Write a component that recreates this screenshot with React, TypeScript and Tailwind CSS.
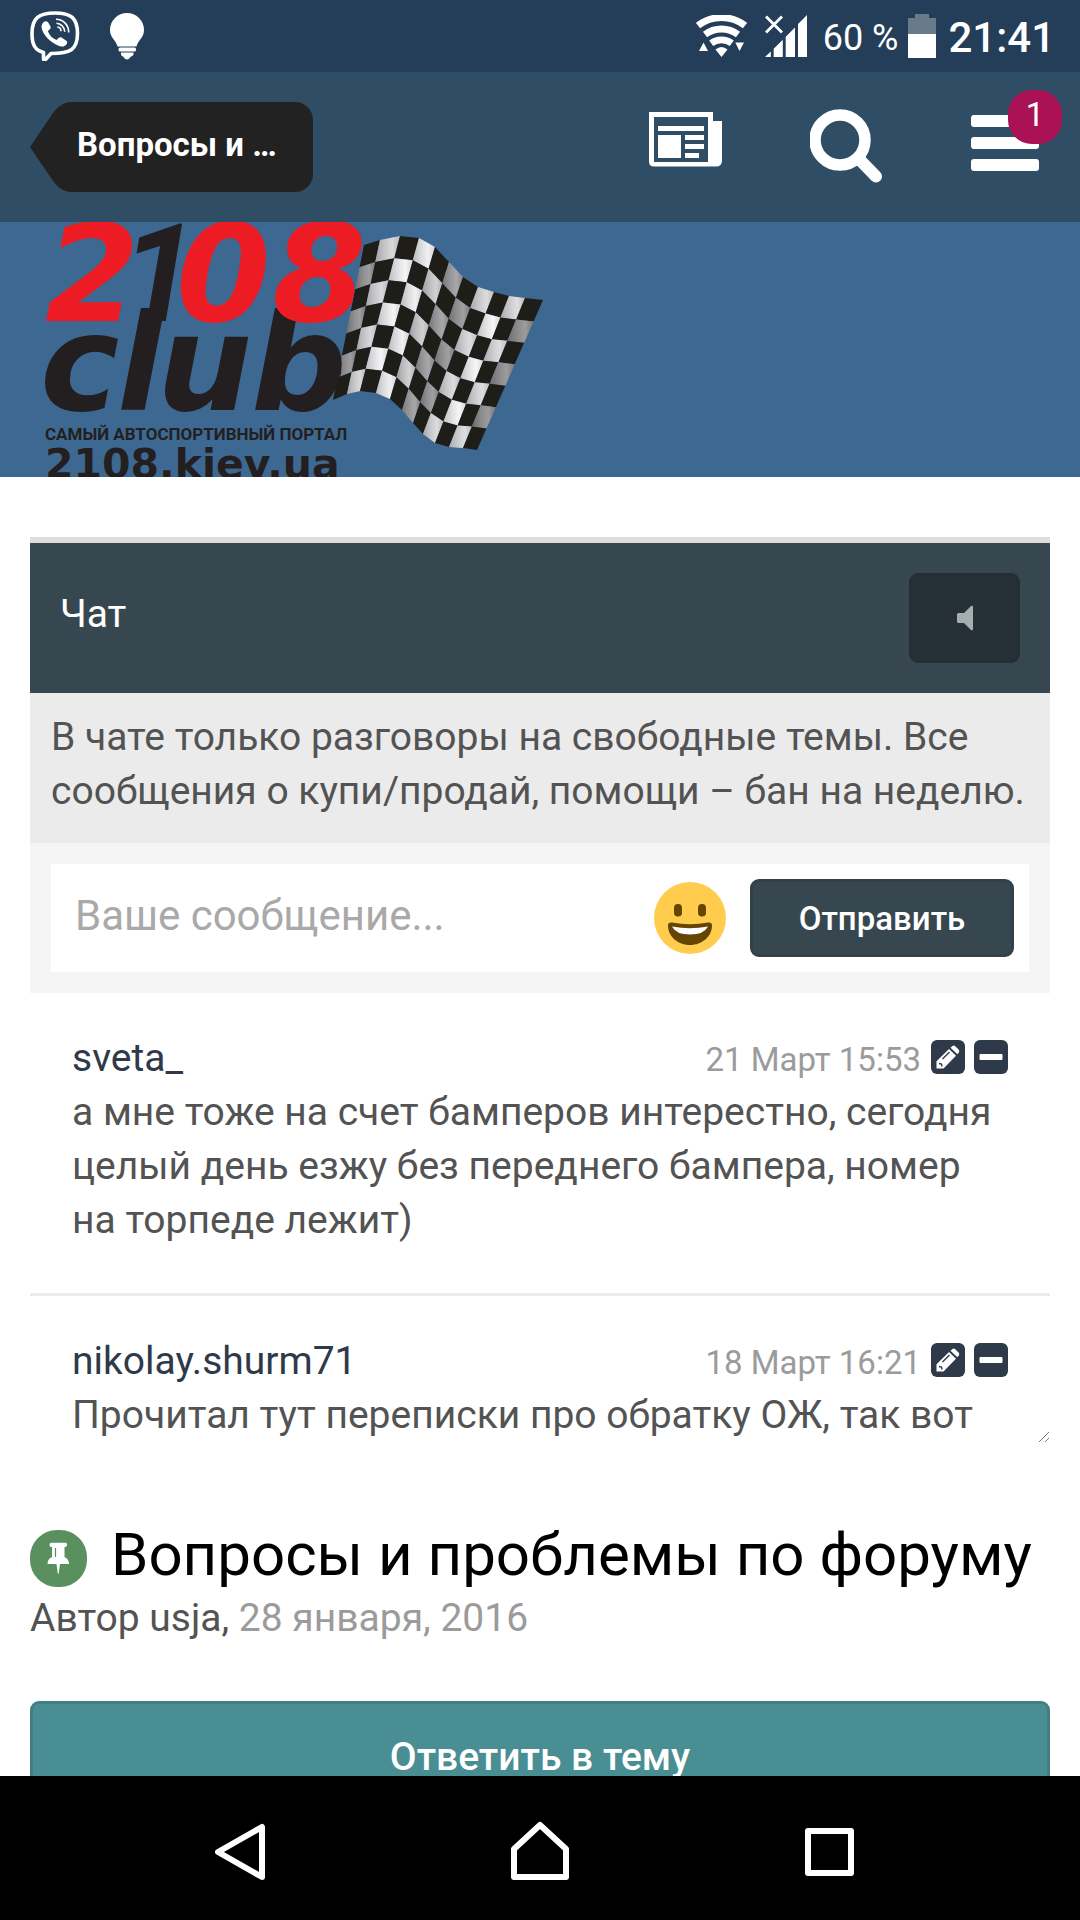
import React, { useState } from "react";

const MESSAGES = [
  {
    id: 1,
    author: "sveta_",
    date: "21 Март 15:53",
    text: "а мне тоже на счет бамперов интерестно, сегодня целый день езжу без переднего бампера, номер на торпеде лежит)",
  },
  {
    id: 2,
    author: "nikolay.shurm71",
    date: "18 Март 16:21",
    text: "Прочитал тут переписки про обратку ОЖ, так вот",
  },
];

// Flag edges, from the pole side to the free side
const FLAG_TOP = [
  [319, 23], [335, 18], [355, 14], [374, 16], [390, 25], [404, 40],
  [418, 55], [433, 65], [449, 70], [464, 74], [480, 76], [498, 78],
];
const FLAG_BOTTOM = [
  [288, 178], [302, 172], [315, 169], [331, 171], [345, 177], [357, 188],
  [368, 201], [378, 212], [390, 221], [404, 225], [418, 226], [432, 228],
];
const FLAG_ROWS = 7;
const FLAG_SHADES = [
  "#8d8d90", "#d2d2d5", "#f2f2f4", "#eeeef0", "#c9c9cc", "#98989b",
  "#8f8f92", "#d6d6d8", "#f4f4f5", "#d8d8da", "#8a8a8c",
];

function flagPoint(col: number, row: number) {
  const t = row / FLAG_ROWS;
  const [x1, y1] = FLAG_TOP[col];
  const [x2, y2] = FLAG_BOTTOM[col];
  return `${x1 + (x2 - x1) * t},${y1 + (y2 - y1) * t}`;
}

function Flag() {
  const cells = [];
  for (let col = 0; col < FLAG_SHADES.length; col++) {
    for (let row = 0; row < FLAG_ROWS; row++) {
      const points = [
        flagPoint(col, row),
        flagPoint(col + 1, row),
        flagPoint(col + 1, row + 1),
        flagPoint(col, row + 1),
      ].join(" ");
      const dark = (col + row) % 2 === 0;
      cells.push(
        <g key={`${col}-${row}`}>
          <polygon points={points} fill={dark ? "#1f1d18" : FLAG_SHADES[col]} />
          {!dark && <polygon points={points} fill="url(#fold)" />}
        </g>
      );
    }
  }
  return (
    <g>
      <defs>
        <linearGradient id="fold">
          <stop offset="0" stopColor="#000" stopOpacity="0.22" />
          <stop offset="0.7" stopColor="#fff" stopOpacity="0.15" />
          <stop offset="1" stopColor="#000" stopOpacity="0.1" />
        </linearGradient>
      </defs>
      {cells}
    </g>
  );
}

function Logo() {
  return (
    <svg viewBox="0 0 498 255" className="w-[498px] h-[255px] block">
      <Flag />
      <text
        y="188"
        fill="#231f20"
        className="font-['DejaVu_Sans',sans-serif] font-bold italic text-[134px]"
      >
        <tspan x="-5">c</tspan>
        <tspan x="72">l</tspan>
        <tspan x="112">u</tspan>
        <tspan x="206">b</tspan>
      </text>
      <text
        y="99"
        fill="#ed1c24"
        className="font-['DejaVu_Sans',sans-serif] font-bold italic text-[136px]"
      >
        <tspan x="0">2</tspan>
        <tspan x="76" fill="#231f20" className="font-['Roboto',sans-serif]">
          1
        </tspan>
        <tspan x="131">0</tspan>
        <tspan x="227">8</tspan>
      </text>
      <text
        x="0"
        y="218"
        fill="#231f20"
        className="font-['Roboto',sans-serif] font-bold text-[17px]"
      >
        САМЫЙ АВТОСПОРТИВНЫЙ ПОРТАЛ
      </text>
      <text
        x="0"
        y="256"
        fill="#231f20"
        className="font-['DejaVu_Sans',sans-serif] font-bold text-[41px]"
      >
        2108.kiev.ua
      </text>
    </svg>
  );
}

function StatusBar() {
  return (
    <div className="h-[72px] shrink-0 bg-[#243e5a] flex items-center pl-[30px] pr-[25px] text-white">
      {/* Viber */}
      <svg viewBox="0 0 50 50" className="w-[50px] h-[50px]" fill="none" stroke="#fff">
        <path
          strokeWidth="3.6"
          strokeLinejoin="round"
          d="M25 2C41 2 47.500 7 47.500 22.500 47.500 39 40 42.500 21 42.500L15.500 48.500Q13.500 50 13.500 47.500V41.500C5 39 2 34 2 22.500 2 7 9 2 25 2Z"
        />
        <path
          fill="#fff"
          stroke="none"
          d="M12.500 12.500C14.500 9.500 17 9.500 18.500 12L20.500 15.500C21.500 18 18.500 18.500 18 20.500 19.500 24.500 22.500 27.500 26.500 29 28 28 29 25.500 31.500 26.500L36 29.500C38.500 31 36.500 34 34.500 35 32.500 36 30 35.500 28 34.500 20 31 13 24 11.500 16.500Q11.200 14.300 12.500 12.500Z"
        />
        <path strokeWidth="1.6" d="M26 8.300C33.500 8.500 38.500 14 38.800 21.500M26.500 12.300C31 12.500 34.500 16 34.800 20.800M27.300 16C29.500 16.200 31 17.800 31 20.300" />
      </svg>
      {/* Bulb */}
      <svg viewBox="0 0 34 47" className="w-[34px] h-[47px] ml-[30px]" fill="#fff">
        <path d="M17 0a17 17 0 0 1 17 17c0 8-6 10-7.500 16.500h-19C6 27 0 25 0 17A17 17 0 0 1 17 0Z" />
        <rect x="8.500" y="34.600" width="17.500" height="4" rx="1.500" />
        <path d="M11 39.600h12.500q.5 3.400-2.500 4-2 3-4 3t-4-3q-2.500-.6-2-4Z" />
      </svg>

      <div className="ml-auto flex items-center">
        {/* Wi-Fi */}
        <svg viewBox="0 0 51 42" className="w-[51px] h-[42px]" fill="#fff">
          <g fill="none" stroke="#fff" strokeWidth="6.800">
            <path d="M2 10.500A38.500 38.500 0 0 1 49 10.500" />
            <path d="M9 19.500A27.500 27.500 0 0 1 42 19.500" />
            <path d="M15.200 28.300A17.500 17.500 0 0 1 35.800 28.300" />
          </g>
          <path d="M19.500 34.500Q25.500 29.500 31.500 34.500L25.500 42ZM3 36l4.500-8.500L12 36ZM39.300 27.500H48L43.500 36Z" />
        </svg>
        {/* Signal */}
        <svg viewBox="0 0 42 42" className="w-[42px] h-[42px] ml-[18px]" fill="#fff">
          <path stroke="#fff" strokeWidth="2.800" d="M1 1.500 17 17.500M17 1.500 1 17.500" />
          <path d="M0 42 5.800 36.500V42ZM8.700 42V33.800L17.800 24.700V42ZM20.700 42V21.700L30 12.400V42ZM33 42V9L42 0V42Z" />
        </svg>
        <span className="text-[36px] leading-[42px] ml-4 pt-1">60 %</span>
        {/* Battery */}
        <svg viewBox="0 0 28 44" className="w-[28px] h-[44px] ml-[10px]">
          <path fill="#687a8c" d="M7 0H21V4H28V20H0V4H7Z" />
          <path fill="#fff" d="M0 20H28V44H0Z" />
        </svg>
        <span className="text-[42px] leading-[42px] font-medium ml-3 pt-1">21:41</span>
      </div>
    </div>
  );
}

function Header() {
  return (
    <header className="h-[150px] shrink-0 bg-[#2f4d65] flex items-center justify-between pl-[30px] pr-[41px]">
      <a href="#forum" className="flex h-[90px] text-white">
        <svg viewBox="0 0 42 90" className="w-[42px] h-[90px]" fill="#222">
          <path d="M42 0V90C33 90 27 85 21 76L0 45 21 14C27 5 33 0 42 0Z" />
        </svg>
        <span className="bg-[#222] rounded-r-[18px] flex items-center pl-[5px] pr-[36px] pb-1 text-[33px] font-bold">
          Вопросы и …
        </span>
      </a>
      <div className="flex items-center gap-[88px] pb-0.5">
        <button aria-label="Лента">
          <svg viewBox="0 0 73 74" className="w-[73px] h-[74px]" fill="#fff">
            <path
              fillRule="evenodd"
              d="M0 3H64V12H73V51.500Q73 57.500 67 57.500H5Q0 57.500 0 52.500ZM5 8V53H59V8Z"
            />
            <path d="M9 17H55V22H9ZM9 26H32V49H9ZM36 26H55V31H36ZM36 35H55V40H36ZM36 44H50V49H36Z" />
          </svg>
        </button>
        <button aria-label="Поиск">
          <svg viewBox="1 0 73 74" className="w-[73px] h-[74px]" fill="none" stroke="#fff">
            <circle cx="31" cy="31" r="25" strokeWidth="11.500" />
            <path strokeWidth="12" strokeLinecap="round" d="M50 50 67 67.500" />
          </svg>
        </button>
        <button aria-label="Меню" className="relative">
          <svg viewBox="0 0 68 74" className="w-[68px] h-[74px]" fill="#fff">
            <rect y="6" width="68" height="12" rx="3" />
            <rect y="28" width="68" height="12" rx="3" />
            <rect y="50" width="68" height="12" rx="3" />
          </svg>
          <span className="absolute left-[37px] -top-[19px] w-[54px] h-[54px] rounded-[24px] bg-[#ab1256] text-white text-[33px] leading-[50px] text-center">
            1
          </span>
        </button>
      </div>
    </header>
  );
}

function Smile() {
  return (
    <svg viewBox="0 0 72 74" className="w-[72px] h-[74px]">
      <ellipse cx="36" cy="37" rx="36" ry="36" fill="#ffcc4d" />
      <rect x="20" y="23" width="8" height="12.500" rx="3.800" fill="#664500" />
      <rect x="44" y="23" width="8" height="12.500" rx="3.800" fill="#664500" />
      <path
        fill="#664500"
        d="M18 41.500Q36 45 54 41.500 58 41 58 44.500C58 55.500 48 64 36 64S14 55.500 14 44.500Q14 41 18 41.500Z"
      />
      <path fill="#fff" d="M18 45.500Q36 49 54 45.500 50 53.500 36 53.500T18 45.500Z" />
    </svg>
  );
}

function EditIcon() {
  return (
    <svg viewBox="0 0 34 34" className="w-[34px] h-[34px]">
      <rect width="34" height="34" rx="6" fill="#2e3a49" />
      <path fill="#fff" d="M5.500 21.300 18 9 25 15.800 12.500 28.500H5.500Z" />
      <path fill="#fff" d="M19.500 7.700 21.500 6Q23 5 24.500 6.500L27.500 9.500Q29 11 27.800 12.500L26.300 14.300Z" />
      <path fill="none" stroke="#2e3a49" strokeWidth="1.400" d="M11.500 19 18.500 12M8 23.500l2.500.5.500 2.500" />
    </svg>
  );
}

function DeleteIcon() {
  return (
    <svg viewBox="0 0 34 34" className="w-[34px] h-[34px]">
      <rect width="34" height="34" rx="6" fill="#2e3a49" />
      <rect x="5.500" y="14" width="23" height="6" rx="1" fill="#fff" />
    </svg>
  );
}

function Chat() {
  const [message, setMessage] = useState("");
  const [messages, setMessages] = useState(MESSAGES);

  const handleDelete = (id: number) => {
    setMessages(messages.filter((item) => item.id !== id));
  };

  return (
    <section className="border-t-[6px] border-[#dedede]">
      {/* Chat header */}
      <div className="h-[150px] bg-[#37474f] text-white flex items-center justify-between px-[30px]">
        <h2 className="text-[39px] leading-[54px] pb-2">Чат</h2>
        <button
          aria-label="Звук"
          className="w-[111px] h-[90px] rounded-[9px] bg-[#263137] border-[3px] border-[#242e34] flex items-center justify-center"
        >
          <svg viewBox="0 0 16 26" className="w-[16px] h-[26px]" fill="#a8adaf">
            <path d="M1.500 8H7L14 1Q16 0 16 2V24Q16 26 14 25L7 18H1.500Q0 18 0 16.500V9.500Q0 8 1.500 8Z" />
          </svg>
        </button>
      </div>

      {/* Rules */}
      <p className="bg-[#ebebeb] text-[#535353] text-[39px] leading-[54px] pt-[17px] pb-[25px] px-[21px]">
        В чате только разговоры на свободные темы. Все сообщения о купи/продай,
        помощи – бан на неделю.
      </p>

      {/* Message form */}
      <form className="bg-[#f5f5f5] p-[21px]" onSubmit={(e) => e.preventDefault()}>
        <div className="bg-white h-[108px] flex items-center pr-[15px]">
          <input
            type="text"
            aria-label="Ваше сообщение"
            placeholder="Ваше сообщение..."
            className="flex-1 min-w-0 h-full pl-6 pb-1.5 text-[42px] text-[#535353] placeholder:text-[#a9a9a9] outline-none"
            value={message}
            onChange={(e) => setMessage(e.target.value)}
          />
          <button type="button" aria-label="Смайлы">
            <Smile />
          </button>
          <button
            type="submit"
            className="w-[264px] h-[78px] pt-0.5 ml-6 rounded-[9px] bg-[#37474f] border-[3px] border-[#324148] text-white text-[33px] font-medium"
          >
            Отправить
          </button>
        </div>
      </form>

      {/* Messages */}
      <div className="h-[450px] overflow-hidden relative">
        {messages.map((item) => (
          <article
            key={item.id}
            className="border-b-[3px] border-[#ebebeb] px-[42px] pt-[38px] pb-[46px] text-[39px] leading-[54px] text-[#535353]"
          >
            <div className="flex items-baseline justify-between">
              <a href="#user" className="text-[#2e3a49]">
                {item.author}
              </a>
              <div className="flex items-center gap-[9px]">
                <time className="text-[33px] leading-[42px] text-[#9b9b9b] pr-px">{item.date}</time>
                <button aria-label="Редактировать" className="mb-1.5">
                  <EditIcon />
                </button>
                <button
                  aria-label="Удалить"
                  className="mb-1.5"
                  onClick={() => handleDelete(item.id)}
                >
                  <DeleteIcon />
                </button>
              </div>
            </div>
            <p>{item.text}</p>
          </article>
        ))}
        <svg
          viewBox="0 0 12 12"
          className="absolute right-0 bottom-0 w-[12px] h-[12px]"
          stroke="#777"
          fill="none"
        >
          <path d="M1 11 11 1M7 11 11 7" />
        </svg>
      </div>
    </section>
  );
}

function Topic() {
  return (
    <section className="pt-[76px]">
      <div className="flex items-center gap-6">
        <svg viewBox="0 0 57 57" className="w-[57px] h-[57px] mt-1.5 shrink-0">
          <rect width="57" height="57" rx="27" fill="#5a905d" />
          <path
            fill="#fff"
            d="M21.500 12.700H35.500Q37 12.700 37 14.700T35.500 17H34.500V27Q39 29 39 34H17.500Q17.500 29 22 27V17H21Q19.500 17 19.500 14.700T21.500 12.700ZM26.500 34H30L28.800 43Q28.200 45 27.700 43Z"
          />
          <path stroke="#5a905d" strokeWidth="1.200" d="M25.500 18V27" />
        </svg>
        <h1 className="text-[60px] leading-[72px] text-black whitespace-nowrap">
          Вопросы и проблемы по форуму
        </h1>
      </div>
      <p className="text-[39px] leading-[54px] text-[#535353]">
        Автор usja, <time className="text-[#9b9b9b]">28 января, 2016</time>
      </p>
      <button className="w-full h-[111px] mt-14 pt-0.5 rounded-[9px] bg-[#488e93] border-[3px] border-[#408085] text-white text-[39px] font-medium">
        Ответить в тему
      </button>
    </section>
  );
}

function NavigationBar() {
  return (
    <nav className="h-36 pt-2 shrink-0 bg-black flex items-center justify-center gap-[235px]">
      <button aria-label="Назад">
        <svg viewBox="4 0 60 66" className="w-[60px] h-[66px]" fill="none" stroke="#fff" strokeWidth="6" strokeLinejoin="round">
          <path d="M51 8V58L7 33Z" />
        </svg>
      </button>
      <button aria-label="Домой">
        <svg viewBox="0 0 60 66" className="w-[60px] h-[66px]" fill="none" stroke="#fff" strokeWidth="6" strokeLinejoin="round">
          <path d="M4 58V30L30 6 56 30V58Z" />
        </svg>
      </button>
      <button aria-label="Недавние">
        <svg viewBox="4 0 60 66" className="w-[60px] h-[66px]" fill="none" stroke="#fff" strokeWidth="6" strokeLinejoin="round">
          <path d="M7 12H50V54H7Z" />
        </svg>
      </button>
    </nav>
  );
}

export default function App() {
  return (
    <div className="h-screen flex flex-col bg-white font-['Roboto',sans-serif]">
      <StatusBar />
      <Header />
      <div className="flex-1 min-h-0 overflow-y-auto [scrollbar-width:none]">
        <div className="bg-[#3d6892] pl-[45px] overflow-hidden">
          <Logo />
        </div>
        <main className="px-[30px] pt-[60px] pb-[60px]">
          <Chat />
          <Topic />
        </main>
      </div>
      <NavigationBar />
    </div>
  );
}
